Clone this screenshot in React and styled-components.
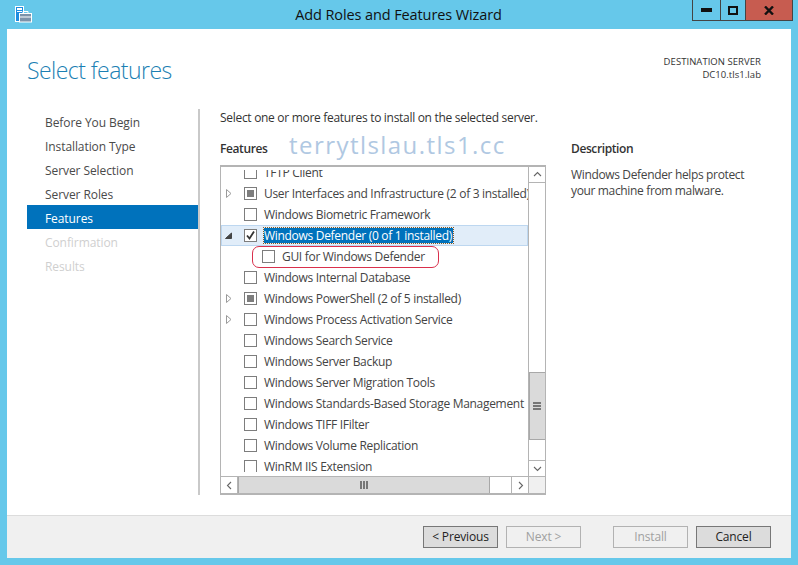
import React from "react";
import styled, { createGlobalStyle } from "styled-components";

const GlobalStyle = createGlobalStyle`
  html, body {
    margin: 0;
    padding: 0;
    background: #66c8ea;
  }
  * { box-sizing: border-box; }
`;

const uiFont = `"Open Sans", "Noto Sans", "Liberation Sans", sans-serif`;

const Wizard = styled.div`
  position: relative;
  width: 798px;
  height: 565px;
  display: flex;
  flex-direction: column;
  background: #66c8ea;
  font-family: ${uiFont};
  font-size: 12px;
  letter-spacing: -0.3px;
  color: #3c3c3c;
  overflow: hidden;
`;

const TitleBar = styled.div`
  height: 29px;
  flex: none;
  display: grid;
  grid-template-columns: 105px 1fr 106px;
`;

const AppIcon = styled.div`
  padding: 6px 0 0 15px;
`;

const Title = styled.div`
  text-align: center;
  font-size: 14.5px;
  letter-spacing: -0.1px;
  line-height: 30px;
  color: #111;
`;

const WindowControls = styled.div`
  display: flex;
  height: 21px;
  width: 101px;
  border-bottom: 1px solid #444;
  border-right: 1px solid #444;
`;

const WindowButton = styled.div`
  width: ${(p) => p.$w}px;
  display: flex;
  align-items: center;
  justify-content: center;
  border-left: 1px solid #444;
  background: ${(p) => (p.$close ? "#c75c50" : "transparent")};
`;

const Client = styled.div`
  flex: 1;
  margin: 0 7px 7px;
  display: flex;
  flex-direction: column;
  background: #fff;
`;

const Header = styled.div`
  height: 80px;
  flex: none;
  display: flex;
  justify-content: space-between;
  padding: 25px 30px 0 20px;
`;

const PageTitle = styled.div`
  font-size: 23px;
  font-weight: 300;
  letter-spacing: -0.55px;
  line-height: 32px;
  color: #1b7fb3;
`;

const Destination = styled.div`
  text-align: right;
  font-size: 9.5px;
  line-height: 13px;
  letter-spacing: 0.05px;
  color: #333;
  padding-top: 1px;
`;

const Body = styled.div`
  flex: 1;
  display: flex;
`;

const Nav = styled.div`
  width: 193px;
  height: 386px;
  flex: none;
  padding-left: 20px;
  border-right: 2px solid #c9c9c9;
  margin-right: 20px;
`;

const NavItem = styled.div`
  height: 24px;
  line-height: 28px;
  padding-left: 18px;
  letter-spacing: -0.08px;
  background: ${(p) => (p.$active ? "#0072bc" : "transparent")};
  color: ${(p) => (p.$active ? "#fff" : p.$disabled ? "#cfcfcf" : "#4a4a4a")};
`;

const Center = styled.div`
  width: 326px;
  flex: none;
  padding-top: 1px;
`;

const Intro = styled.div`
  height: 30px;
  line-height: 15px;
  color: #333;
`;

const SectionHeading = styled.div`
  height: 25px;
  line-height: 17px;
  font-weight: 600;
  letter-spacing: -0.4px;
  color: #333;
`;

const ListBox = styled.div`
  height: 330px;
  display: grid;
  grid-template-columns: 307px 1fr;
  grid-template-rows: 1fr 17px;
  border: 1px solid #b4b4b4;
  border-bottom-width: 2px;
  border-top-width: 2px;
`;

const Rows = styled.div`
  padding: 3px 0 4px;
  min-height: 0;
`;

const RowsClip = styled.div`
  height: 100%;
  overflow: hidden;
`;

const RowsInner = styled.div`
  margin-top: -8px;
`;

const Row = styled.div`
  height: 21px;
  display: flex;
  align-items: center;
  padding-left: ${(p) => (p.$child ? 41 : 23)}px;
  background: ${(p) => (p.$selected ? "#e1edf9" : "transparent")};
  box-shadow: ${(p) => (p.$selected ? "inset 0 0 0 1px #bdd7f0" : "none")};
  position: relative;
  white-space: nowrap;
  color: #444;
`;

const ExpanderSlot = styled.span`
  position: absolute;
  left: 3px;
  top: 6px;
  width: 9px;
  height: 9px;
  display: flex;
`;

const CheckBox = styled.span`
  width: 13px;
  height: 13px;
  flex: none;
  border: 1px solid #7d7d7d;
  background: #fff;
  margin-right: 7px;
  display: flex;
  align-items: center;
  justify-content: center;
`;

const PartialMark = styled.span`
  width: 7px;
  height: 7px;
  background: #7d7d7d;
`;

const Label = styled.span`
  ${(p) => (p.$highlight ? "background:#0072bc;color:#fff;outline:1px dotted #8a5a20;padding-right:1px;line-height:15px;" : "")}
`;

const VScroll = styled.div`
  border-left: 1px solid #b4b4b4;
  display: flex;
  flex-direction: column;
`;

const ScrollArrow = styled.div`
  flex: none;
  width: ${(p) => p.$w || "100%"};
  height: ${(p) => p.$h || "100%"};
  display: flex;
  align-items: center;
  justify-content: center;
  border-bottom: ${(p) => (p.$bottom ? "1px solid #b4b4b4" : "none")};
  border-top: ${(p) => (p.$top ? "1px solid #b4b4b4" : "none")};
  border-right: ${(p) => (p.$right ? "1px solid #b4b4b4" : "none")};
  border-left: ${(p) => (p.$left ? "1px solid #b4b4b4" : "none")};
`;

const TrackGap = styled.div`
  flex: ${(p) => (p.$fixed ? `0 0 ${p.$fixed}px` : 1)};
`;

const VThumb = styled.div`
  height: 68px;
  flex: none;
  background: #dadada;
  border: 1px solid #a8a8a8;
  border-left-width: 0;
  border-right-width: 0;
  box-shadow: inset 1px 0 0 #a8a8a8;
  display: flex;
  flex-direction: column;
  align-items: center;
  justify-content: center;
  gap: 1px;
`;

const GripLine = styled.span`
  width: 8px;
  height: 2px;
  background: #777;
`;

const HScroll = styled.div`
  grid-column: 1;
  border-top: 1px solid #b4b4b4;
  display: flex;
`;

const HThumb = styled.div`
  width: 252px;
  flex: none;
  background: #dadada;
  border-left: 1px solid #a8a8a8;
  border-right: 1px solid #a8a8a8;
  display: flex;
  align-items: center;
  justify-content: center;
  gap: 1px;
`;

const GripBar = styled.span`
  width: 2px;
  height: 8px;
  background: #777;
`;

const Corner = styled.div`
  background: #f0f0f0;
  border-top: 1px solid #b4b4b4;
  border-left: 1px solid #b4b4b4;
`;

const Side = styled.div`
  width: 200px;
  flex: none;
  padding: 31px 0 0 25px;
`;

const DescText = styled.div`
  padding-top: 2px;
  line-height: 16px;
  letter-spacing: -0.35px;
  white-space: nowrap;
  color: #444;
`;

const Footer = styled.div`
  height: 43px;
  flex: none;
  display: flex;
  align-items: flex-start;
  padding: 10px 0 0 416px;
  background: #f0f0f0;
  border-top: 1px solid #dcdcdc;
`;

const Button = styled.div`
  width: 75px;
  height: 22px;
  line-height: 20px;
  text-align: center;
  letter-spacing: -0.15px;
  margin-left: ${(p) => p.$gap || 0}px;
  border: 1px solid ${(p) => (p.$disabled ? "#b2b2b2" : "#777")};
  background: ${(p) => (p.$disabled ? "#f0f0f0" : "#dcdcdc")};
  color: ${(p) => (p.$disabled ? "#a0a0a0" : "#222")};
`;

const Watermark = styled.div`
  position: absolute;
  left: 289px;
  top: 128px;
  font-size: 24px;
  letter-spacing: 1.45px;
  line-height: 34px;
  color: #b0c8e2;
`;

const RedOutline = styled.div`
  position: absolute;
  left: 252px;
  top: 246px;
  width: 187px;
  height: 22px;
  border: 1px solid #d9304c;
  border-radius: 7px;
`;

const Chevron = ({ d, w = 9, h = 9 }) => (
  <svg width={w} height={h} viewBox="0 0 9 9" fill="none">
    <path d={d} stroke="#666" strokeWidth="1.1" />
  </svg>
);

const ServerIcon = () => (
  <svg width="17" height="17" viewBox="0 0 17 17" style={{ display: "block" }}>
    <rect x="0.5" y="0.5" width="8" height="15" fill="#1f8de0" stroke="#fff" />
    <rect x="2" y="2" width="5" height="2" fill="#fff" />
    <rect x="2" y="5" width="5" height="1" fill="#fff" />
    <rect x="4.5" y="7.5" width="12" height="8.5" fill="#7c93aa" stroke="#fff" />
    <path d="M8 7.5V5.5h5v2" fill="none" stroke="#fff" />
    <path d="M5 11h11" stroke="#fff" />
  </svg>
);

const Check = () => (
  <svg width="11" height="11" viewBox="0 0 11 11" fill="none">
    <path d="M2 5.5l2.5 3L9 1.5" stroke="#333" strokeWidth="1.8" />
  </svg>
);

const collapsed = (
  <svg width="9" height="9" viewBox="0 0 9 9" fill="none">
    <path d="M2.5 0.5l4.5 4-4.5 4z" stroke="#9a9a9a" fill="#fff" />
  </svg>
);

const expanded = (
  <svg width="9" height="9" viewBox="0 0 9 9">
    <path d="M7.5 2v5.5H1.5z" fill="#444" stroke="#444" />
  </svg>
);

const features = [
  { label: "TFTP Client" },
  { label: "User Interfaces and Infrastructure (2 of 3 installed)", tree: collapsed, partial: true },
  { label: "Windows Biometric Framework" },
  { label: "Windows Defender (0 of 1 installed)", tree: expanded, checked: true, selected: true },
  { label: "GUI for Windows Defender", child: true },
  { label: "Windows Internal Database" },
  { label: "Windows PowerShell (2 of 5 installed)", tree: collapsed, partial: true },
  { label: "Windows Process Activation Service", tree: collapsed },
  { label: "Windows Search Service" },
  { label: "Windows Server Backup" },
  { label: "Windows Server Migration Tools" },
  { label: "Windows Standards-Based Storage Management" },
  { label: "Windows TIFF IFilter" },
  { label: "Windows Volume Replication" },
  { label: "WinRM IIS Extension" },
];

const steps = ["Before You Begin", "Installation Type", "Server Selection", "Server Roles", "Features", "Confirmation", "Results"];

export default function App() {
  return (
    <Wizard>
      <GlobalStyle />
      <TitleBar>
        <AppIcon>
          <ServerIcon />
        </AppIcon>
        <Title>Add Roles and Features Wizard</Title>
        <WindowControls>
          <WindowButton $w={28}>
            <svg width="11" height="4"><rect width="11" height="4" fill="#111" /></svg>
          </WindowButton>
          <WindowButton $w={26}>
            <svg width="10" height="9"><rect x="1" y="1" width="8" height="7" fill="none" stroke="#111" strokeWidth="2" /></svg>
          </WindowButton>
          <WindowButton $w={47} $close>
            <svg width="10" height="9" viewBox="0 0 10 9"><path d="M1 .5l8 8M9 .5l-8 8" stroke="#111" strokeWidth="2.4" /></svg>
          </WindowButton>
        </WindowControls>
      </TitleBar>
      <Client>
        <Header>
          <PageTitle>Select features</PageTitle>
          <Destination>
            DESTINATION SERVER
            <br />
            DC10.tls1.lab
          </Destination>
        </Header>
        <Body>
          <Nav>
            {steps.map((s, i) => (
              <NavItem key={s} $active={i === 4} $disabled={i > 4}>
                {s}
              </NavItem>
            ))}
          </Nav>
          <Center>
            <Intro>Select one or more features to install on the selected server.</Intro>
            <SectionHeading>Features</SectionHeading>
            <ListBox>
              <Rows>
                <RowsClip>
                  <RowsInner>
                    {features.map((f) => (
                      <Row key={f.label} $child={f.child} $selected={f.selected}>
                        {f.tree && <ExpanderSlot>{f.tree}</ExpanderSlot>}
                        <CheckBox>
                          {f.partial && <PartialMark />}
                          {f.checked && <Check />}
                        </CheckBox>
                        <Label $highlight={f.selected}>{f.label}</Label>
                      </Row>
                    ))}
                  </RowsInner>
                </RowsClip>
              </Rows>
              <VScroll>
                <ScrollArrow $h="16px" $bottom>
                  <Chevron d="M1 6l3.5-3.5L8 6" />
                </ScrollArrow>
                <TrackGap $fixed={189} />
                <VThumb>
                  <GripLine />
                  <GripLine />
                  <GripLine />
                </VThumb>
                <TrackGap />
                <ScrollArrow $h="16px" $top>
                  <Chevron d="M1 3l3.5 3.5L8 3" />
                </ScrollArrow>
              </VScroll>
              <HScroll>
                <ScrollArrow $w="17px" $right>
                  <Chevron d="M6 1L2.5 4.5 6 8" />
                </ScrollArrow>
                <HThumb>
                  <GripBar />
                  <GripBar />
                  <GripBar />
                </HThumb>
                <TrackGap />
                <ScrollArrow $w="17px" $left>
                  <Chevron d="M3 1l3.5 3.5L3 8" />
                </ScrollArrow>
              </HScroll>
              <Corner />
            </ListBox>
          </Center>
          <Side>
            <SectionHeading>Description</SectionHeading>
            <DescText>
              Windows Defender helps protect
              <br />
              your machine from malware.
            </DescText>
          </Side>
        </Body>
        <Footer>
          <Button>&lt; Previous</Button>
          <Button $gap={8} $disabled>Next &gt;</Button>
          <Button $gap={32} $disabled>Install</Button>
          <Button $gap={8}>Cancel</Button>
        </Footer>
      </Client>
      <Watermark>terrytlslau.tls1.cc</Watermark>
      <RedOutline />
    </Wizard>
  );
}
